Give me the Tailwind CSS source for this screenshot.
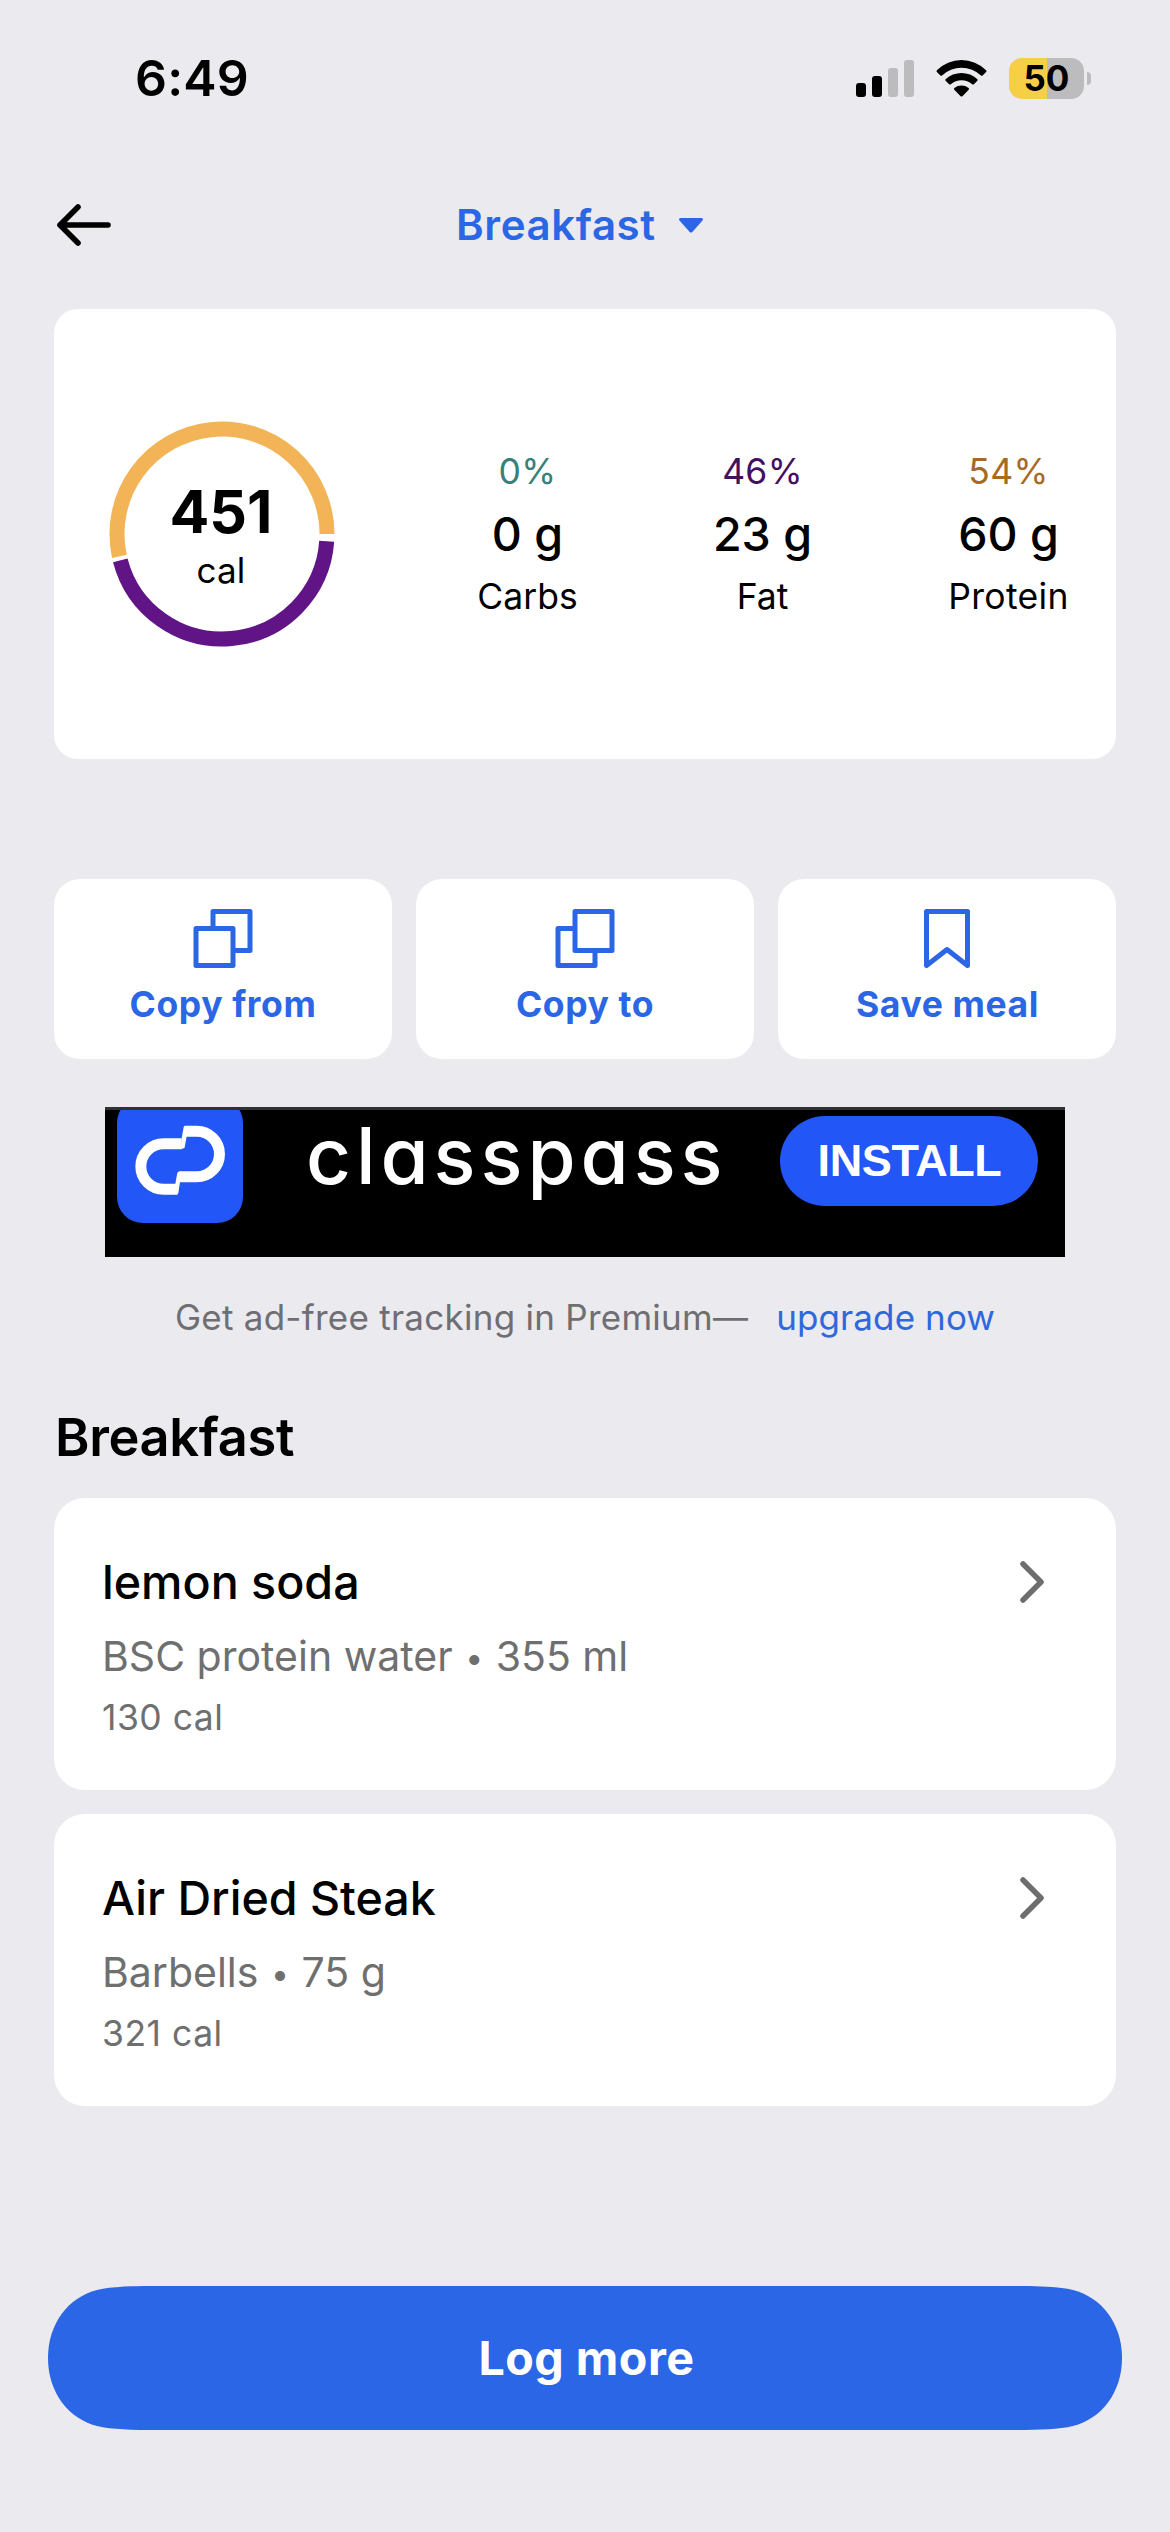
<!DOCTYPE html>
<html lang="en">
<head>
<meta charset="utf-8">
<title>Breakfast</title>
<script src="https://cdn.jsdelivr.net/npm/@tailwindcss/browser@4"></script>
</head>
<body class="bg-[#ebeaee] font-['Inter',sans-serif] text-black">
<div class="flex h-[2532px] w-[1170px] flex-col overflow-hidden whitespace-nowrap">

  <!-- Status bar -->
  <header class="flex h-[156px] shrink-0 items-center pl-[135px]">
    <span class="w-[721px] text-[50px] leading-none font-semibold tracking-[0.2px]">6:49</span>
    <svg class="h-[37px] w-[58px]" viewBox="0 0 58 37">
      <rect x="0" y="23" width="10" height="14" rx="3"/>
      <rect x="16" y="16" width="10" height="21" rx="3"/>
      <rect x="32" y="8" width="10" height="29" rx="3" fill="#bcbbbe"/>
      <rect x="48" y="0" width="10" height="37" rx="3" fill="#bcbbbe"/>
    </svg>
    <svg class="ml-[22px] h-[37px] w-[51px]" viewBox="0 0 51 37">
      <path d="M0.9 10.2 A35 35 0 0 1 50.1 10.2 Q50.9 11 50.1 11.9 L46.6 15.4 Q45.8 16.1 45 15.4 A28.5 28.5 0 0 0 6 15.4 Q5.2 16.1 4.4 15.4 L0.9 11.9 Q0.1 11 0.9 10.2Z"/>
      <path d="M9.6 19.2 A23.5 23.5 0 0 1 41.4 19.2 Q42.1 20 41.4 20.8 L37.9 24.2 Q37.1 24.9 36.2 24.2 A16.5 16.5 0 0 0 14.8 24.2 Q13.9 24.9 13.1 24.2 L9.6 20.8 Q8.9 20 9.6 19.2Z"/>
      <path d="M18.4 28 A11.5 11.5 0 0 1 32.6 28 Q33.5 29 32.7 29.8 L26.4 36.2 Q25.5 37 24.6 36.2 L18.3 29.8 Q17.5 29 18.4 28Z"/>
    </svg>
    <div class="ml-[22px] flex h-[41px] w-[75px] items-center justify-center rounded-[13px] bg-linear-to-r from-[#f6cf47] from-51% to-[#bcbbbe] to-51%">
      <span class="text-[35px] leading-none font-bold">50</span>
    </div>
    <div class="ml-[3px] h-[13px] w-[4px] rounded-r-full bg-[#bcbbbe]"></div>
  </header>

  <!-- Navigation -->
  <nav class="flex h-[138px] shrink-0 items-center pl-[57px]">
    <svg class="h-[42px] w-[54px]" viewBox="0 0 54 42" fill="none" stroke="black" stroke-width="5.6" stroke-linecap="round" stroke-linejoin="round">
      <path d="M51 21H3M21 3L3 21L21 39"/>
    </svg>
    <span class="ml-[345px] w-[223px] text-[42px] leading-none font-semibold tracking-[0.6px] text-[#2b66e5]">Breakfast</span>
    <svg class="h-[15px] w-[24px]" viewBox="0 0 24 15">
      <path d="M1.5 0H22.5Q25 0.5 23.3 2.7L13.3 13.9Q12 15.2 10.7 13.9L0.7 2.7Q-1 0.5 1.5 0Z" fill="#2b66e5"/>
    </svg>
  </nav>

  <!-- Calorie summary -->
  <section class="mx-[54px] mt-[15px] flex h-[450px] shrink-0 items-center rounded-[24px] bg-white pl-[55px]">
    <div class="relative h-[226px] w-[226px]">
      <svg class="h-full w-full" viewBox="-113 -113 226 226" fill="none" stroke-width="15">
        <path d="M-102.6 22.4A105 105 0 1 1 105 0" stroke="#f2b456"/>
        <path d="M104.7 7.3A105 105 0 0 1 -101.7 26.3" stroke="#601486"/>
      </svg>
      <div class="absolute inset-0 flex flex-col items-center pt-[62px] pr-[2px] text-center">
        <span class="text-[59px] leading-[58px] font-bold">451</span>
        <span class="text-[35px] leading-[58px] tracking-[0.2px]">cal</span>
      </div>
    </div>
    <div class="ml-[142px] flex gap-[134px] text-center text-[35.5px] leading-[62px]">
      <div class="flex w-[101px] flex-col items-center">
        <span class="tracking-[0.3px] text-[#38807a]">0%</span>
        <span class="text-[46.6px] font-medium">0 g</span>
        <span class="pt-px">Carbs</span>
      </div>
      <div class="flex w-[101px] flex-col items-center">
        <span class="tracking-[0.3px] text-[#430f5f]">46%</span>
        <span class="text-[46.6px] font-medium">23 g</span>
        <span class="pt-px">Fat</span>
      </div>
      <div class="flex w-[123px] flex-col items-center">
        <span class="tracking-[0.3px] text-[#a66a26]">54%</span>
        <span class="text-[46.6px] font-medium">60 g</span>
        <span class="pt-px tracking-[0.3px]">Protein</span>
      </div>
    </div>
  </section>

  <!-- Actions -->
  <section class="mx-[54px] mt-[120px] grid h-[180px] shrink-0 grid-cols-3 gap-[24px] text-[35.5px] leading-[44px] font-bold tracking-[0.6px] text-[#2b66e5]">
    <div class="flex flex-col items-center rounded-[26px] bg-white pt-[30px]">
      <svg class="h-[60px] w-[60px]" viewBox="0 0 60 60" fill="none" stroke="currentColor" stroke-width="5" stroke-linejoin="round">
        <path d="M20 17.5V2.5H57V41.5H42"/>
        <rect x="3" y="19.5" width="37" height="37"/>
      </svg>
      <span class="mt-[14px]">Copy from</span>
    </div>
    <div class="flex flex-col items-center rounded-[26px] bg-white pt-[30px]">
      <svg class="h-[60px] w-[60px]" viewBox="0 0 60 60" fill="none" stroke="currentColor" stroke-width="5" stroke-linejoin="round">
        <path d="M18 19.5H3V56.5H40V41.5"/>
        <rect x="20" y="2.5" width="37" height="39"/>
      </svg>
      <span class="mt-[14px]">Copy to</span>
    </div>
    <div class="flex flex-col items-center rounded-[26px] bg-white pt-[30px]">
      <svg class="h-[60px] w-[60px]" viewBox="0 0 60 60" fill="none" stroke="currentColor" stroke-width="5" stroke-linejoin="round">
        <path d="M9.5 2.5H50.5V56.5L30 40.5L9.5 56.5Z"/>
      </svg>
      <span class="mt-[14px] pl-px">Save meal</span>
    </div>
  </section>

  <!-- Ad banner -->
  <section class="mx-[105px] mt-[48px] flex h-[150px] shrink-0 items-start overflow-hidden border-t-[3px] border-[#303133] bg-black pl-[12px] text-white">
    <svg class="-mt-[13px] h-[126px] w-[126px] shrink-0 rounded-[26px] bg-[#2356f6]" viewBox="81 21 378 378">
      <path d="M286 123.5H320A68.5 68.5 0 0 1 320 260.5H268M275 161H221A68.5 68.5 0 0 0 221 298H262" fill="none" stroke="white" stroke-width="33"/>
      <path d="M275 145L281 111Q282 107 287 107L290 139L284 172Q282 177 272 177Z" fill="white"/>
      <path d="M270 276L265 309Q264 314 258 314L256 281L262 249Q264 244 272 244Z" fill="white"/>
    </svg>
    <span class="mt-px ml-[63px] w-[474px] text-[78px] leading-[90px] font-medium tracking-[4.9px] [font-feature-settings:'cv11']">classpass</span>
    <span class="mt-[5.5px] h-[90px] w-[258px] rounded-full bg-[#2356f6] pl-px text-center font-['Liberation_Sans',sans-serif] text-[45px] leading-[90px] font-bold tracking-[-0.4px]">INSTALL</span>
  </section>
  <p class="mt-[30px] flex shrink-0 justify-center gap-[28px] text-[35px] leading-[60px] text-[#6f6e73]">
    <span class="tracking-[0.26px]">Get ad-free tracking in Premium—</span>
    <span class="tracking-[0.1px] text-[#2f68dd]">upgrade now</span>
  </p>

  <!-- Logged foods -->
  <h2 class="mt-[54px] mb-[25px] shrink-0 pl-[55px] text-[52.4px] leading-[72px] font-semibold tracking-[-0.36px]">Breakfast</h2>
  <section class="mx-[54px] flex shrink-0 flex-col gap-[24px] text-[#6f6f6f]">
    <article class="flex h-[292px] items-start justify-between rounded-[31px] bg-white pr-[72px] pl-[48px]">
      <div class="flex flex-col pt-[54px]">
        <span class="text-[46.6px] leading-[60px] font-medium text-black">lemon soda</span>
        <span class="mt-[17px] text-[41px] leading-[54px]">BSC protein water <span class="relative -top-[2px] mx-px text-[32px] leading-none">•</span> 355 ml</span>
        <span class="mt-[13px] text-[35.5px] leading-[44px] tracking-[0.5px]">130 cal</span>
      </div>
      <svg class="mt-[63px] h-[42px] w-[24px]" viewBox="0 0 24 42" fill="none" stroke="#6d6d6d" stroke-width="5.5" stroke-linecap="round" stroke-linejoin="round">
        <path d="M3 3L21 21L3 39"/>
      </svg>
    </article>
    <article class="flex h-[292px] items-start justify-between rounded-[31px] bg-white pr-[72px] pl-[48px]">
      <div class="flex flex-col pt-[54px]">
        <span class="text-[46.6px] leading-[60px] font-medium text-black">Air Dried Steak</span>
        <span class="mt-[17px] text-[41px] leading-[54px]">Barbells <span class="relative -top-[2px] mx-px text-[32px] leading-none">•</span> 75 g</span>
        <span class="mt-[13px] text-[35.5px] leading-[44px] tracking-[0.5px]">321 cal</span>
      </div>
      <svg class="mt-[63px] h-[42px] w-[24px]" viewBox="0 0 24 42" fill="none" stroke="#6d6d6d" stroke-width="5.5" stroke-linecap="round" stroke-linejoin="round">
        <path d="M3 3L21 21L3 39"/>
      </svg>
    </article>
  </section>

  <!-- Primary button with continuous-curvature ends -->
  <button class="relative mx-[48px] mt-[180px] flex h-[144px] shrink-0 items-center justify-center">
    <svg class="absolute inset-0 h-full w-full" viewBox="0 0 1074 144" fill="#2a66e5">
      <path d="M0 72C0 37 21 11 49 4C64 0.4 84 0 110 0H964C990 0 1010 0.4 1025 4C1053 11 1074 37 1074 72C1074 107 1053 133 1025 140C1010 143.6 990 144 964 144H110C84 144 64 143.6 49 140C21 133 0 107 0 72Z"/>
    </svg>
    <span class="relative pl-[3px] text-[46.6px] leading-none font-bold tracking-[0.5px] text-white">Log more</span>
  </button>
</div>
</body>
</html>
